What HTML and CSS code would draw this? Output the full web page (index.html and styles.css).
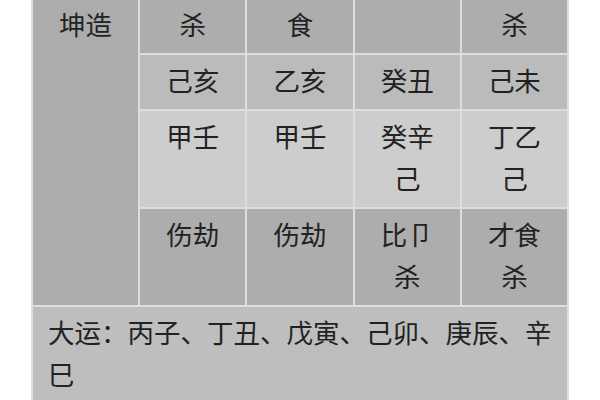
FILE: index.html
```html
<!DOCTYPE html>
<html lang="zh-CN">
<head>
<meta charset="utf-8">
<link rel="stylesheet" href="styles.css">
</head>
<body>
<div class="page">
<table class="chart">
  <colgroup>
    <col><col><col><col><col>
  </colgroup>
  <tr class="r-shen">
    <td class="name" rowspan="4">坤造</td>
    <td>杀</td><td>食</td><td></td><td>杀</td>
  </tr>
  <tr class="r-gz">
    <td>己亥</td><td>乙亥</td><td>癸丑</td><td>己未</td>
  </tr>
  <tr class="r-cang">
    <td>甲壬</td><td>甲壬</td><td>癸辛<br>己</td><td>丁乙<br>己</td>
  </tr>
  <tr class="r-ss">
    <td>伤劫</td><td>伤劫</td><td>比卩<br>杀</td><td>才食<br>杀</td>
  </tr>
  <tr class="r-yun">
    <td class="yun" colspan="5">大运：丙子、丁丑、戊寅、己卯、庚辰、辛巳</td>
  </tr>
</table>
</div>
</body>
</html>
```

FILE: styles.css
```css
html, body {
  margin: 0;
  padding: 0;
  background: #ffffff;
}
.page {
  padding: 0 31px;
  height: 400px;
  overflow: hidden;
}
.chart {
  width: 538px;
  margin-top: -3px;
  border-collapse: collapse;
  table-layout: fixed;
  font-family: "Noto Sans CJK SC", "Noto Sans", sans-serif;
  font-size: 26.5px;
  line-height: 42px;
  color: #222222;
}
.chart td {
  border: 2px solid #dedede;
  padding: 4px 0 8px;
  text-align: center;
  vertical-align: top;
}
.chart td.name {
  background: #acacac;
}
.r-shen td { background: #adadad; }
.r-gz td { background: #bbbbbb; }
.r-cang td { background: #cdcdcd; }
.r-ss td { background: #adadad; }
.chart td.yun {
  background: #bebebe;
  text-align: left;
  padding: 4px 15px 8px;
}
```
